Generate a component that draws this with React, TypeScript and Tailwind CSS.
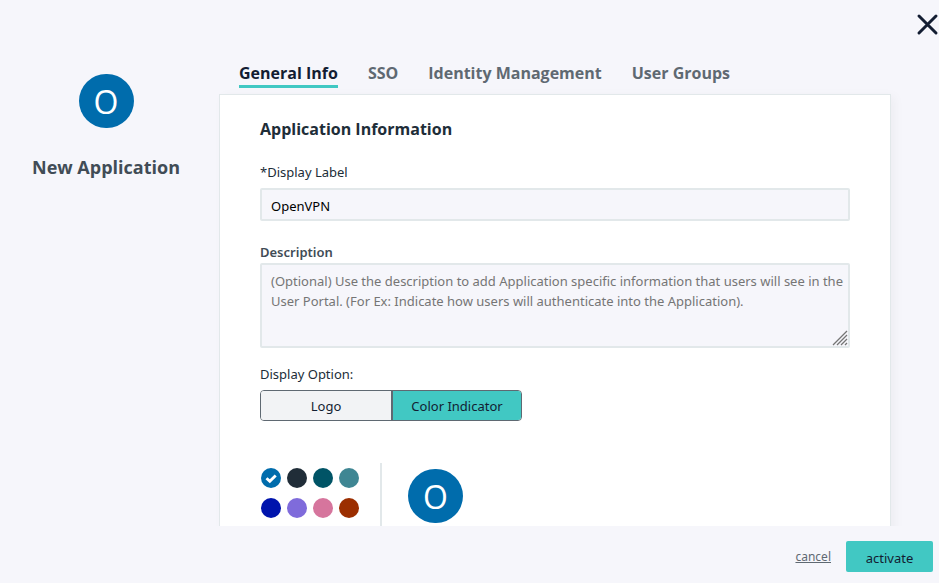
import { useState } from "react";

const TABS = ["General Info", "SSO", "Identity Management", "User Groups"];

const DISPLAY_OPTIONS = ["Logo", "Color Indicator"];

const COLORS = [
  { name: "Blue", value: "#006cac" },
  { name: "Charcoal", value: "#202d38" },
  { name: "Deep Teal", value: "#005466" },
  { name: "Teal", value: "#3f8693" },
  { name: "Navy", value: "#0014ad" },
  { name: "Purple", value: "#7f6bdb" },
  { name: "Pink", value: "#d6759d" },
  { name: "Rust", value: "#9b2e00" },
];

interface IColorBadgeProps {
  color: string;
  label: string;
}

const ColorBadge = ({ color, label }: IColorBadgeProps) => {
  return (
    <div
      className="flex h-[54px] w-[55px] shrink-0 items-center justify-center rounded-full pt-[2px] text-[32px] leading-8 text-white"
      style={{ backgroundColor: color }}
    >
      {label.charAt(0).toUpperCase()}
    </div>
  );
};

const App = () => {
  const [activeTab, setActiveTab] = useState(TABS[0]);
  const [displayLabel, setDisplayLabel] = useState("OpenVPN");
  const [description, setDescription] = useState("");
  const [displayOption, setDisplayOption] = useState("Color Indicator");
  const [color, setColor] = useState(COLORS[0].value);

  return (
    <div className="relative flex h-screen flex-col bg-[#f6f6fb] font-['Noto_Sans',sans-serif] text-[13px] leading-5 text-[#202d38]">
      <button
        className="absolute top-3 right-0 cursor-pointer"
        aria-label="Close"
      >
        <svg width="24" height="24" viewBox="0 0 24 24" fill="none">
          <path
            d="M4 4 21 21M21 4 4 21"
            stroke="#131d32"
            strokeWidth="3"
            strokeLinecap="round"
          />
        </svg>
      </button>

      <div className="flex min-h-0 flex-1 overflow-hidden pr-12">
        <aside className="flex w-[219px] shrink-0 flex-col items-center gap-6 pt-[74px] pr-[7px] font-['Open_Sans',sans-serif]">
          <ColorBadge color={color} label={displayLabel} />
          <h1 className="text-lg leading-[30px] font-bold text-[#414c56]">
            New Application
          </h1>
        </aside>

        <main className="min-w-0 flex-1 pt-[60px]">
          <nav className="flex h-[34px] items-start gap-[30px] pl-5 font-['Open_Sans',sans-serif] text-base font-bold">
            {TABS.map((tab) => (
              <button
                key={tab}
                className={
                  tab === activeTab
                    ? "h-7 cursor-pointer border-b-3 border-[#41c8c3] leading-6 text-[#131d32]"
                    : "h-7 cursor-pointer border-b-3 border-transparent leading-6 text-[#5f6972]"
                }
                onClick={() => setActiveTab(tab)}
              >
                {tab}
              </button>
            ))}
          </nav>

          <form className="border border-[#e2e8ea] bg-white px-10 pt-[22px] pb-10 shadow-[4px_2px_10px_rgba(0,0,0,0.04)]">
            <h2 className="mb-[21px] font-['Open_Sans',sans-serif] text-base leading-6 font-bold">
              Application Information
            </h2>

            <label htmlFor="displayLabel" className="block">
              *Display Label
            </label>
            <input
              id="displayLabel"
              className="mt-[6px] mb-[21px] block h-[33px] w-full rounded-xs border-2 border-[#e2e8ea] bg-[#f6f6fb] px-[9px] pt-[2px] text-black"
              value={displayLabel}
              onChange={(e) => setDisplayLabel(e.target.value)}
            />

            <label
              htmlFor="description"
              className="block font-semibold text-[#414c56]"
            >
              Description
            </label>
            <div className="relative mt-px">
              <textarea
                id="description"
                className="block h-[85px] w-full rounded-xs border-2 border-[#e2e8ea] bg-[#f6f6fb] py-[6px] pr-0 pl-[9px] placeholder:text-[#757575] [&::-webkit-resizer]:bg-transparent"
                placeholder="(Optional) Use the description to add Application specific information that users will see in the User Portal. (For Ex: Indicate how users will authenticate into the Application)."
                value={description}
                onChange={(e) => setDescription(e.target.value)}
              />
              <svg
                className="pointer-events-none absolute right-[2px] bottom-[2px]"
                width="16"
                height="16"
                viewBox="0 0 16 16"
                fill="none"
              >
                <path
                  d="M1 15 15 1M5 15 15 5M9 15 15 9M13 15 15 13"
                  stroke="#757575"
                  strokeWidth="1.3"
                />
              </svg>
            </div>

            <fieldset className="mt-4">
              <legend className="mb-[6px]">Display Option:</legend>
              <div className="grid h-[31px] w-[262px] grid-cols-2 overflow-hidden rounded-sm border border-[#5f6972]">
                {DISPLAY_OPTIONS.map((option) => (
                  <label
                    key={option}
                    className="flex cursor-pointer items-center justify-center border-[#5f6972] bg-[#f2f3f5] pt-px text-[#131d32] last:border-l-2 has-checked:bg-[#41c8c3]"
                  >
                    <input
                      type="radio"
                      name="displayOption"
                      className="sr-only"
                      checked={displayOption === option}
                      onChange={() => setDisplayOption(option)}
                    />
                    {option}
                  </label>
                ))}
              </div>
            </fieldset>

            <div className="mt-[42px] flex h-[100px]">
              <div className="grid grid-cols-4 content-start gap-x-[6px] gap-y-[10px] border-r-2 border-[#e2e8ea] pt-[5px] pr-[21px] pl-px">
                {COLORS.map(({ name, value }) => (
                  <label
                    key={value}
                    className="flex size-5 cursor-pointer items-center justify-center rounded-full"
                    style={{ backgroundColor: value }}
                  >
                    <input
                      type="radio"
                      name="color"
                      aria-label={name}
                      className="sr-only"
                      checked={color === value}
                      onChange={() => setColor(value)}
                    />
                    {color === value && (
                      <svg
                        width="12"
                        height="12"
                        viewBox="0 0 12 12"
                        fill="none"
                      >
                        <path
                          d="M1.5 6.3 4.8 9.3 10.7 3.5"
                          stroke="#fff"
                          strokeWidth="2.9"
                        />
                      </svg>
                    )}
                  </label>
                ))}
              </div>
              <div className="pt-[6px] pl-[26px] font-['Open_Sans',sans-serif]">
                <ColorBadge color={color} label={displayLabel} />
              </div>
            </div>
          </form>
        </main>
      </div>

      <footer className="flex h-[57px] shrink-0 items-center justify-end gap-[15px] pt-1 pr-[6px]">
        <button className="cursor-pointer text-xs text-[#5f6972] underline">
          cancel
        </button>
        <button className="h-[31px] w-[87px] cursor-pointer rounded-xs bg-[#41c8c3] pt-[3px] text-[#131d32]">
          activate
        </button>
      </footer>
    </div>
  );
};

export default App;
